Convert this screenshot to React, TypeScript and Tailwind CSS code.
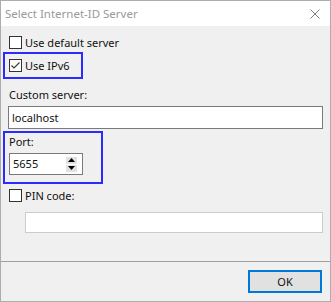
import React from 'react';

function CheckBox({ checked = false }: { checked?: boolean }) {
  return (
    <span className="w-[13px] h-[13px] border border-[#333333] bg-white flex-shrink-0 flex items-center justify-center">
      {checked && (
        <svg width="11" height="11" viewBox="0 0 11 11">
          <polyline points="1.5,5.5 4,8 9.5,2.5" fill="none" stroke="#3c3c3c" strokeWidth="1.2" />
        </svg>
      )}
    </span>
  );
}

function SpinArrow({ up }: { up?: boolean }) {
  return (
    <span className="w-[11px] h-[7px] bg-[#e1e1e1] flex items-center justify-center">
      <svg width="7" height="4" viewBox="0 0 7 4">
        <polygon points={up ? '0,4 3.5,0 7,4' : '0,0 3.5,4 7,0'} fill="#000" />
      </svg>
    </span>
  );
}

export default function App() {
  return (
    <div className="w-[331px] h-[302px] border border-[#adadad] bg-[#f0f0f0] flex flex-col font-['Noto_Sans',sans-serif] text-[11px] leading-[16px] text-[#111111]">
      {/* Title bar */}
      <div className="h-[25px] bg-white flex items-center justify-between pl-[4px] pr-[10px] flex-shrink-0">
        <span className="text-[#999999] text-[11.5px]">Select Internet-ID Server</span>
        <svg width="10" height="10" viewBox="0 0 10 10">
          <path d="M0.5 0.5 L9.5 9.5 M9.5 0.5 L0.5 9.5" stroke="#808080" strokeWidth="1" />
        </svg>
      </div>

      {/* Body */}
      <div className="h-[235px] flex flex-col items-start flex-shrink-0">
        <label className="mt-[10px] ml-[8px] h-[13px] flex items-center gap-[3px]">
          <CheckBox />
          <span>Use default server</span>
        </label>

        <div className="mt-[3px] ml-[2px] w-[80px] h-[27px] border-2 border-[#2b2bff] pt-[5px] pl-[4px]">
          <label className="h-[13px] flex items-center gap-[3px]">
            <CheckBox checked />
            <span>Use IPv6</span>
          </label>
        </div>

        <span className="mt-[8px] ml-[8px]">Custom server:</span>
        <div className="mt-[3px] ml-[7px] w-[315px] h-[23px] border border-[#7a7a7a] bg-white flex items-center pl-[3px]">
          localhost
        </div>

        <div className="mt-[2px] ml-[2px] w-[100px] h-[53px] border-2 border-[#2b2bff] pt-[1px] flex flex-col items-start">
          <span className="ml-[4px]">Port:</span>
          <div className="mt-[3px] ml-[4px] w-[74px] h-[22px] border border-[#7a7a7a] bg-white flex items-center justify-between pl-[3px] pr-[5px]">
            <span>5655</span>
            <div className="flex flex-col gap-[1px]">
              <SpinArrow up />
              <SpinArrow />
            </div>
          </div>
        </div>

        <label className="mt-[5px] ml-[8px] h-[13px] flex items-center gap-[3px]">
          <CheckBox />
          <span>PIN code:</span>
        </label>
        <div className="mt-[10px] ml-[24px] w-[298px] h-[21px] border border-[#cccccc] bg-white" />
      </div>

      {/* Footer */}
      <div className="flex-1 border-t border-[#a0a0a0] flex justify-end items-start pt-[8px] pr-[8px]">
        <button className="w-[74px] h-[23px] border-2 border-[#0078d7] bg-[#e1e1e1] flex items-center justify-center">
          OK
        </button>
      </div>
    </div>
  );
}
